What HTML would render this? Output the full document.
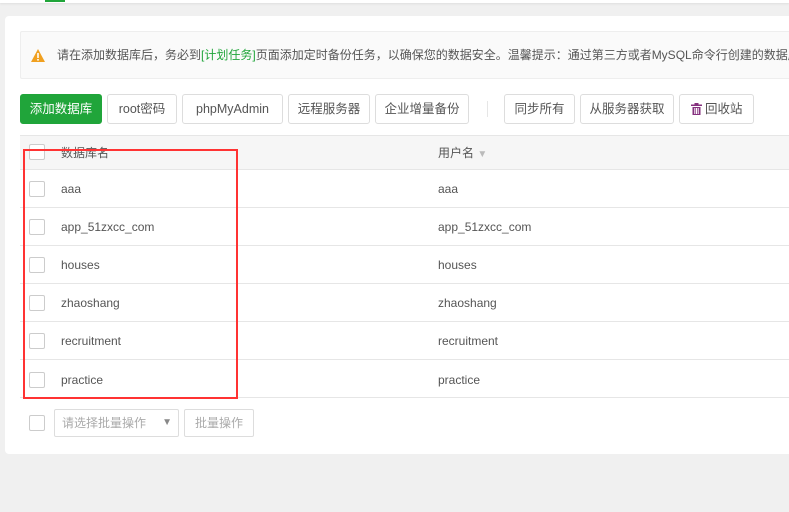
<!DOCTYPE html>
<html><head><meta charset="utf-8"><style>
*{margin:0;padding:0;box-sizing:border-box}
body{width:789px;height:512px;background:#f0f0f0;font-family:"Liberation Sans","Noto Sans CJK SC",sans-serif;font-size:12px;color:#555;position:relative;overflow:hidden}
.top{position:absolute;left:0;top:0;width:789px;height:3px;background:#fff;box-shadow:0 1px 2px #ddd}
.tab{position:absolute;left:45px;top:0;width:20px;height:2px;background:#20a53a}
.card{position:absolute;left:5px;top:16px;width:784px;height:438px;background:#fff;border-radius:4px 0 0 4px}
.alert{position:absolute;left:20px;top:31px;width:769px;height:48px;background:#fafafa;border:1px solid #eee;border-right:none;border-radius:2px 0 0 2px;line-height:46px;padding-left:36px;font-size:12px;color:#555;white-space:nowrap;overflow:hidden}
.alert .g{color:#20a53a}
.btn{position:absolute;top:94px;height:30px;border:1px solid #ddd;border-radius:3px;background:#fff;line-height:28px;text-align:center;font-size:12.5px;color:#555}
.thead{position:absolute;left:20px;top:135px;width:769px;height:35px;background:#f6f6f6;border-top:1px solid #e6e6e6;border-bottom:1px solid #e6e6e6}
.row{position:absolute;left:20px;width:769px;height:38px;border-bottom:1px solid #e6e6e6}
.cb{position:absolute;left:9px;width:16px;height:16px;border:1px solid #ccc;border-radius:2px;background:#fff}
.t{position:absolute;font-size:12px;color:#555}
.red{position:absolute;left:23px;top:149px;width:215px;height:250px;border:2px solid #f33}
</style></head><body>
<div class="top"></div><div class="tab"></div>
<div class="card"></div>
<div class="alert"><svg style="position:absolute;left:10px;top:17px" width="14" height="13" viewBox="0 0 14 13"><path d="M7 0L14 13H0Z" fill="#f0a020"/><rect x="6.2" y="4" width="1.6" height="5" fill="#fff"/><rect x="6.2" y="10" width="1.6" height="1.6" fill="#fff"/></svg>请在添加数据库后，务必到<span class="g">[计划任务]</span>页面添加定时备份任务，以确保您的数据安全。温馨提示：通过第三方或者MySQL命令行创建的数据库，需要手动同步</div>
<div class="btn" style="left:20px;width:82px;background:#20a53a;border-color:#20a53a;color:#fff">添加数据库</div>
<div class="btn" style="left:107px;width:70px">root密码</div>
<div class="btn" style="left:182px;width:101px">phpMyAdmin</div>
<div class="btn" style="left:288px;width:82px">远程服务器</div>
<div class="btn" style="left:375px;width:94px">企业增量备份</div>
<div style="position:absolute;left:487px;top:101px;width:1px;height:16px;background:#e6e6e6"></div>
<div class="btn" style="left:504px;width:71px">同步所有</div>
<div class="btn" style="left:580px;width:94px">从服务器获取</div>
<div class="btn" style="left:679px;width:75px"><svg style="vertical-align:-2px" width="11" height="12" viewBox="0 0 11 12"><rect x="0" y="1.5" width="11" height="1.5" fill="#85307e"/><rect x="3.5" y="0" width="4" height="1.5" fill="#85307e"/><path d="M1.5 4h8v8h-8z" fill="#85307e"/><rect x="3.3" y="5" width="1" height="6" fill="#fff"/><rect x="5" y="5" width="1" height="6" fill="#fff"/><rect x="6.7" y="5" width="1" height="6" fill="#fff"/></svg> 回收站</div>
<div class="thead"><div class="cb" style="top:8px"></div><div class="t" style="left:41px;top:8px">数据库名</div><div class="t" style="left:418px;top:8px">用户名 <span style="color:#bbb;font-size:10px">▼</span></div></div>
<div class="row" style="top:170px"><div class="cb" style="top:11px"></div><div class="t" style="left:41px;top:12px">aaa</div><div class="t" style="left:418px;top:12px">aaa</div></div>
<div class="row" style="top:208px"><div class="cb" style="top:11px"></div><div class="t" style="left:41px;top:12px">app_51zxcc_com</div><div class="t" style="left:418px;top:12px">app_51zxcc_com</div></div>
<div class="row" style="top:246px"><div class="cb" style="top:11px"></div><div class="t" style="left:41px;top:12px">houses</div><div class="t" style="left:418px;top:12px">houses</div></div>
<div class="row" style="top:284px"><div class="cb" style="top:11px"></div><div class="t" style="left:41px;top:12px">zhaoshang</div><div class="t" style="left:418px;top:12px">zhaoshang</div></div>
<div class="row" style="top:322px"><div class="cb" style="top:11px"></div><div class="t" style="left:41px;top:12px">recruitment</div><div class="t" style="left:418px;top:12px">recruitment</div></div>
<div class="row" style="top:360px"><div class="cb" style="top:12px"></div><div class="t" style="left:41px;top:13px">practice</div><div class="t" style="left:418px;top:13px">practice</div></div>
<div class="red"></div>
<div class="cb" style="left:29px;top:415px"></div>
<div style="position:absolute;left:54px;top:409px;width:125px;height:28px;border:1px solid #ddd;border-radius:2px;color:#aaa;line-height:26px;padding-left:7px">请选择批量操作<span style="position:absolute;right:6px;top:0;color:#888;font-size:10px">▼</span></div>
<div style="position:absolute;left:184px;top:409px;width:70px;height:28px;border:1px solid #ddd;border-radius:2px;color:#aaa;line-height:26px;text-align:center">批量操作</div>
</body></html>
